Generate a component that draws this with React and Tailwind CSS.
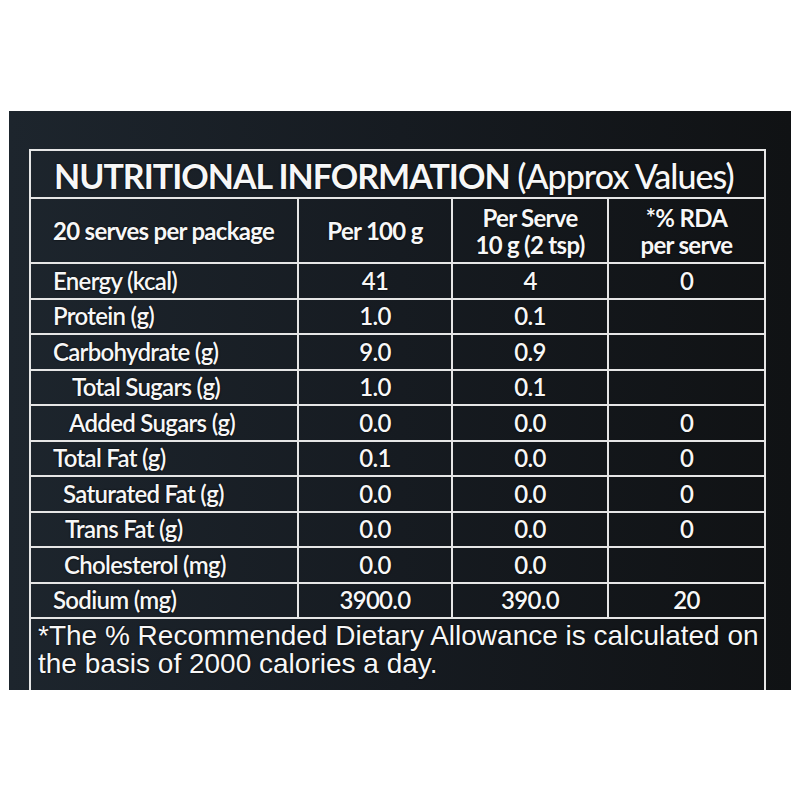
const rows = [
  { label: 'Energy (kcal)', indent: 0, per100: '41', serve: '4', rda: '0' },
  { label: 'Protein (g)', indent: 0, per100: '1.0', serve: '0.1', rda: '' },
  { label: 'Carbohydrate (g)', indent: 0, per100: '9.0', serve: '0.9', rda: '' },
  { label: 'Total Sugars (g)', indent: 19, per100: '1.0', serve: '0.1', rda: '' },
  { label: 'Added Sugars (g)', indent: 16, per100: '0.0', serve: '0.0', rda: '0' },
  { label: 'Total Fat (g)', indent: 0, per100: '0.1', serve: '0.0', rda: '0' },
  { label: 'Saturated Fat (g)', indent: 10, per100: '0.0', serve: '0.0', rda: '0' },
  { label: 'Trans Fat (g)', indent: 12, per100: '0.0', serve: '0.0', rda: '0' },
  { label: 'Cholesterol (mg)', indent: 11, per100: '0.0', serve: '0.0', rda: '' },
  { label: 'Sodium (mg)', indent: 0, per100: '3900.0', serve: '390.0', rda: '20' },
];

const cell = 'border-2 border-[#e6e6e6]';

function App() {
  return (
    <div className="w-[800px] h-[800px] bg-white pt-[111px] pl-[9px]">
      <div className="w-[782px] h-[579px] overflow-hidden bg-gradient-to-r from-[#1d252d] via-[#161b21] to-[#101214] pt-[38px] pl-[20px] text-[#f7f7f7]">
        <table
          className="border-collapse table-fixed w-[735px]"
          style={{ fontFamily: 'Lato, "Open Sans", sans-serif', textShadow: '0 0 2px #000' }}
        >
          <colgroup>
            <col className="w-[268px]" />
            <col className="w-[154px]" />
            <col className="w-[156px]" />
            <col className="w-[157px]" />
          </colgroup>
          <tbody>
            <tr className="h-[48px]">
              <td colSpan={4} className={`${cell} pl-[23px] pt-[3px] text-[34px] leading-none tracking-[-1px] whitespace-nowrap`}>
                <span className="font-bold">NUTRITIONAL INFORMATION</span>{' '}
                <span className="font-medium">(Approx Values)</span>
              </td>
            </tr>
            <tr className="h-[65px] text-[24px] font-bold leading-[27px] tracking-[-0.7px]">
              <td className={`${cell} pl-[22px] whitespace-nowrap`}>20 serves per package</td>
              <td className={`${cell} text-center`}>Per 100 g</td>
              <td className={`${cell} text-center`}>
                <div>Per Serve</div>
                <div>10 g (2 tsp)</div>
              </td>
              <td className={`${cell} text-center`}>
                <div>*% RDA</div>
                <div>per serve</div>
              </td>
            </tr>
            {rows.map((r) => (
              <tr key={r.label} className="h-[35.5px] text-[24px] font-semibold leading-none tracking-[-0.7px]">
                <td className={`${cell} pl-[22px] whitespace-nowrap`}>
                  <span style={{ paddingLeft: r.indent }}>{r.label}</span>
                </td>
                <td className={`${cell} text-center`}>{r.per100}</td>
                <td className={`${cell} text-center`}>{r.serve}</td>
                <td className={`${cell} text-center`}>{r.rda}</td>
              </tr>
            ))}
            <tr>
              <td
                colSpan={4}
                className={`${cell} border-b-0 pl-[7px] pt-[3px] pb-[20px] text-[28px] leading-[28px] align-top`}
                style={{ fontFamily: '"Liberation Sans", Arial, sans-serif' }}
              >
                *The % Recommended Dietary Allowance is calculated on the basis of 2000 calories a day.
              </td>
            </tr>
          </tbody>
        </table>
      </div>
    </div>
  );
}

export default App;
